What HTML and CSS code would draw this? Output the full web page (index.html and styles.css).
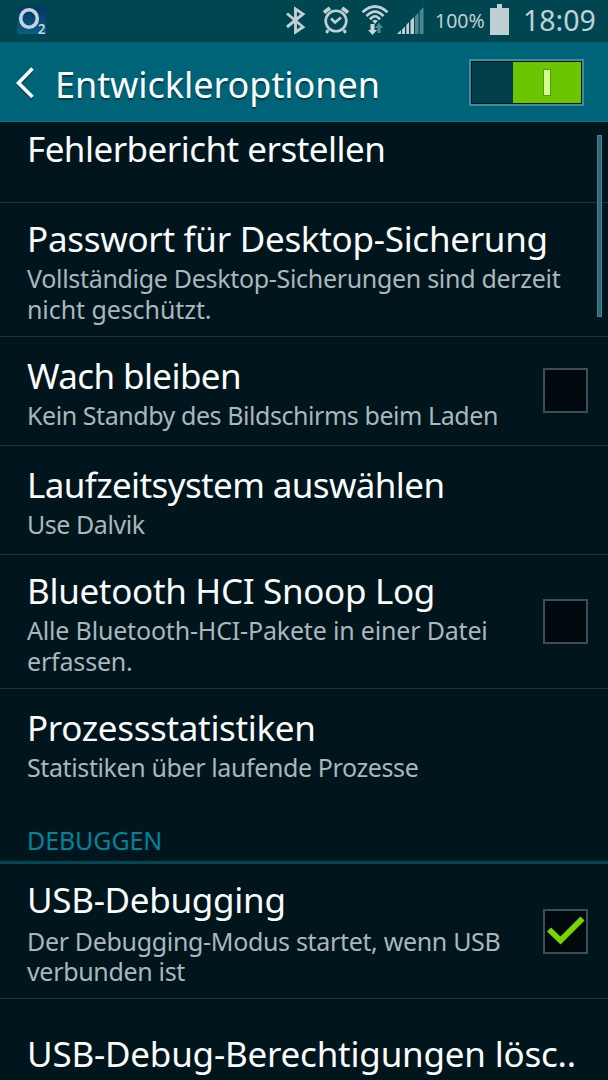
FILE: index.html
```html
<!DOCTYPE html>
<html lang="de">
<head>
<meta charset="utf-8">
<title>Entwickleroptionen</title>
<link rel="stylesheet" href="styles.css">
</head>
<body>
<div class="screen">
  <div class="status">
    <svg class="carrier" width="36" height="34" viewBox="0 0 36 34">
      <defs><linearGradient id="o2" x1="0" y1="0" x2="0" y2="1"><stop offset="0" stop-color="#063467"/><stop offset="1" stop-color="#075f82"/></linearGradient></defs>
      <rect width="29" height="27" rx="1" fill="url(#o2)"/>
      <ellipse cx="12" cy="11.500" rx="8.300" ry="8.700" fill="none" stroke="#c6d4d9" stroke-width="3.600"/>
      <text x="20.800" y="27" class="carrier-sub">2</text>
    </svg>
    <div class="status-right">
      <svg width="150" height="42" viewBox="280 0 150 42" fill="none" stroke="#bfd0d4">
        <path d="M287 13.500L303 27L295.500 32V9L303 14L287 27" stroke-width="2.900"/>
        <circle cx="336" cy="21" r="10.300" stroke-width="2.600"/>
        <path d="M331 18.500L335 22.500L341 17.500" stroke-width="2.600"/>
        <path d="M324 12.500L330 8M348 12.500L342 8" stroke-width="4"/>
        <path d="M328 30L326.500 33M344 30L345.500 33" stroke-width="3"/>
        <path d="M362.500 12.200Q375 0.800 387.500 12.200M366.500 16.200Q375 7 383.500 16.200M370 19.500Q375 13 380 19.500" stroke-width="2.700"/>
        <path d="M372.300 21Q375 18.500 377.700 21L375 24Z" fill="#bfd0d4" stroke="none"/>
        <path d="M370.500 24h4v6h2.500l-4.500 5-4.500-5h2.500z" fill="#c8d7da" stroke="none"/>
        <path d="M377.300 33v-5h-2.300l4-5.500 4 5.500h-2.300v5z" fill="#4b8793" stroke="none"/>
        <path d="M397 34L401 30V34ZM402 29.500L405 26.500V34H402ZM406.300 25L409 22V34H406.300ZM410.500 20.500L414 17V34H410.500Z" fill="#bfd0d4" stroke="none"/>
        <path d="M415 16L418.500 12.500V34H415ZM419.700 11L423.500 7V34H419.700Z" fill="#4b8793" stroke="none"/>
      </svg>
      <span class="percent">100%</span>
      <svg class="battery" width="20" height="32" viewBox="0 0 20 32"><path d="M7 0h5v4h7v27H0V4h7z" fill="#bfd0d4"/></svg>
      <span class="clock">18:09</span>
    </div>
  </div>
  <div class="header">
    <svg class="back" width="20" height="34" viewBox="0 0 20 34" fill="none"><path d="M17.500 4L4 18.500L17.500 33" stroke="#073c49" stroke-width="3.600"/><path d="M17.500 2.500L3.500 17L17.500 31" stroke="#f7fafa" stroke-width="3.600"/></svg>
    <h1 class="heading">Entwickleroptionen</h1>
    <div class="switch"><div class="knob"><div class="bar"></div></div></div>
  </div>
  <div class="list">
    <div class="row first report"><div class="title">Fehlerbericht erstellen</div></div>
    <div class="row tall password"><div><div class="title">Passwort für Desktop-Sicherung</div><div class="sub">Vollständige Desktop-Sicherungen sind derzeit<br><span class="wide">nicht geschützt.</span></div></div></div>
    <div class="row awake"><div><div class="title">Wach bleiben</div><div class="sub">Kein Standby des Bildschirms beim Laden</div></div><div class="check"></div></div>
    <div class="row runtime"><div><div class="title">Laufzeitsystem auswählen</div><div class="sub">Use Dalvik</div></div></div>
    <div class="row tall snoop"><div><div class="title">Bluetooth HCI Snoop Log</div><div class="sub">Alle Bluetooth-HCI-Pakete in einer Datei<br>erfassen.</div></div><div class="check"></div></div>
    <div class="row plain stats"><div><div class="title">Prozessstatistiken</div><div class="sub">Statistiken über laufende Prozesse</div></div></div>
    <div class="section">DEBUGGEN</div>
    <div class="row usb"><div><div class="title">USB-Debugging</div><div class="sub">Der Debugging-Modus startet, wenn USB<br>verbunden ist</div></div><div class="check"><svg width="41" height="41" viewBox="0 0 41 41"><path d="M4 18.500L15.500 29.500L37.500 7.500" fill="none" stroke="#78d600" stroke-width="5.800"/></svg></div></div>
    <div class="row revoke"><div class="title">USB-Debug-Berechtigungen lösc..</div></div>
    <div class="scroll"></div>
  </div>
</div>
</body>
</html>
```
FILE: styles.css
```css
* { box-sizing: border-box; }
body { margin: 0; background: #00151c; font-family: "Noto Sans", sans-serif; }
.screen { width: 608px; height: 1080px; overflow: hidden; display: flex; flex-direction: column; }
.status { height: 42px; flex: none; background: #004651; display: flex; justify-content: space-between; padding: 0 12px 0 17px; color: #c1d1d5; }
.carrier { margin-top: 7px; }
.carrier-sub { font: 600 13.500px "Noto Sans", sans-serif; fill: #c6d4d9; }
.status-right { display: flex; align-items: center; height: 42px; white-space: nowrap; }
.percent { width: 54px; margin-left: 5px; font-size: 19.500px; line-height: 42px; }
.battery { margin: -3px 0 0 1px; }
.clock { width: 73px; margin-left: 13px; font-size: 28.500px; line-height: 38px; margin-top: -2px; }
.header { height: 80px; flex: none; background: #006478; border-bottom: 1px solid #17778a; display: flex; align-items: center; padding: 0 24px 0 15px; color: #fafcfc; }
.back { margin-top: 3px; }
.heading { margin: 6px 0 0 20px; font-size: 36px; font-weight: 400; line-height: 48px; letter-spacing: -0.050px; text-shadow: 0 2px 1px #003c4a; white-space: nowrap; }
.switch { margin: 1px 0 0 auto; width: 115px; height: 47px; border: 2px solid #438b9a; background: #003f4a; box-shadow: inset 0 0 0 1px #00151c; display: flex; justify-content: flex-end; padding: 1px; }
.knob { width: 68px; background: #6bc500; display: flex; align-items: center; justify-content: center; }
.bar { width: 6px; height: 25px; background: #d5ff96; box-shadow: 0 0 0 1px #50a000; }
.list { position: relative; height: 958px; overflow: hidden; }
.row { height: 109px; border-bottom: 1px solid #203239; padding: 2px 20px 0 27px; display: flex; align-items: center; justify-content: space-between; }
.first { margin-top: -28px; }
.tall { height: 134px; }
.plain { border-bottom-color: transparent; }
.usb { height: 135px; }
.title { height: 44px; line-height: 44px; font-size: 35px; color: #fafcfc; white-space: nowrap; }
.sub { margin-top: 2.500px; font-size: 25px; line-height: 30.500px; color: #aab7bc; white-space: nowrap; }
.report .title { letter-spacing: -0.530px; }
.password .title { letter-spacing: -0.290px; }
.password .sub { letter-spacing: -0.310px; }
.password .wide { letter-spacing: -0.080px; }
.awake .title { letter-spacing: -0.600px; }
.awake .sub { letter-spacing: -0.440px; }
.awake .check { margin-top: -4px; }
.runtime .title { letter-spacing: -0.620px; }
.runtime .sub { letter-spacing: -0.450px; }
.snoop .title { letter-spacing: -0.320px; }
.snoop .sub { letter-spacing: -0.180px; }
.stats .title { letter-spacing: -0.340px; }
.stats .sub { letter-spacing: -0.390px; }
.usb .title { letter-spacing: -0.300px; }
.usb .sub { margin-top: 4px; letter-spacing: -0.330px; }
.revoke .title { letter-spacing: -0.210px; }
.check { width: 45px; height: 45px; flex: none; margin-top: -2px; border: 2px solid #3d4e54; background: #00090e; }
.check svg { display: block; }
.section { height: 66px; padding: 24px 0 0 27px; font-size: 25px; line-height: 36px; letter-spacing: -0.100px; color: #00849d; border-bottom: 3px solid #004652; }
.scroll { position: absolute; right: 6px; top: 13px; width: 5px; height: 182px; background: #2f6976; border: 1px solid #438290; }
```
